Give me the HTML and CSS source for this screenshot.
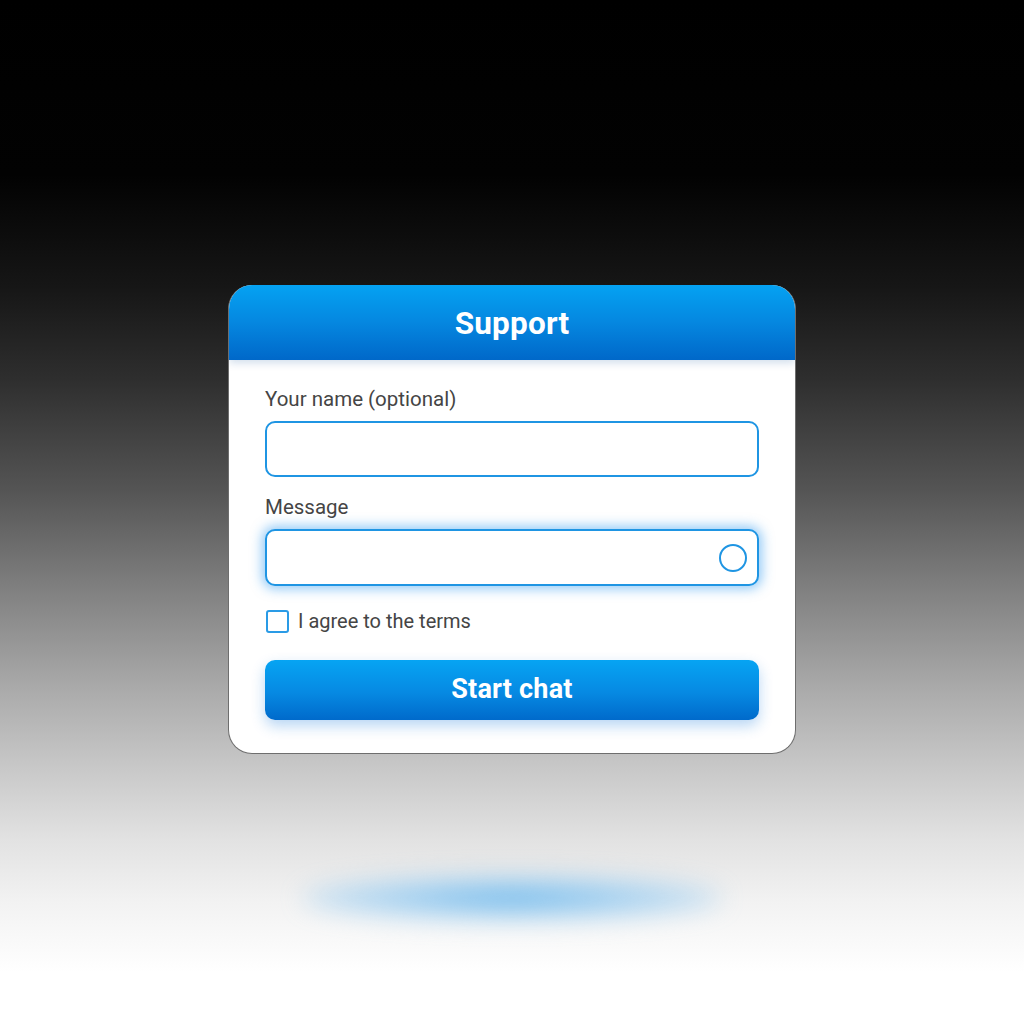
FILE: index.html
```html
<!DOCTYPE html>
<html lang="en">
<head>
<meta charset="utf-8">
<title>Support</title>
<link rel="stylesheet" href="styles.css">
</head>
<body>
<main class="stage">
  <section class="card">
    <header class="card-header">
      <h1 class="title">Support</h1>
    </header>
    <form class="card-body">
      <label class="field-label" for="name">Your name (optional)</label>
      <div class="input-box">
        <input id="name" class="text-input" type="text">
      </div>
      <label class="field-label label-gap" for="msg">Message</label>
      <div class="input-box input-focus">
        <input id="msg" class="text-input" type="text">
        <svg class="input-icon" width="30" height="30" viewBox="0 0 30 30" aria-hidden="true">
          <circle cx="15" cy="15" r="13" fill="none" stroke="#1f95e3" stroke-width="2"/>
        </svg>
      </div>
      <label class="check-row">
        <span class="checkbox"></span>
        <span class="check-text">I agree to the terms</span>
      </label>
      <button class="primary-btn" type="button">Start chat</button>
    </form>
  </section>
  <div class="floor-glow"></div>
</main>
</body>
</html>
```

FILE: styles.css
```css
html, body {
  margin: 0;
  padding: 0;
}
body {
  width: 1024px;
  height: 1024px;
  overflow: hidden;
  background: linear-gradient(to bottom,
    #000000 0%,
    #020202 17%,
    #161616 28%,
    #2e2e2e 37%,
    #555555 48%,
    #828282 58%,
    #a9a9a9 67%,
    #c8c8c8 75%,
    #e2e2e2 82%,
    #f2f2f2 88%,
    #ffffff 95%);
  font-family: Roboto, "Liberation Sans", Arial, sans-serif;
}
.stage {
  display: flex;
  flex-direction: column;
  align-items: center;
  padding-top: 285px;
}
.card {
  width: 566px;
  background: #ffffff;
  border: 1px solid #6e6e6e;
  border-top: none;
  border-radius: 24px;
  overflow: hidden;
  box-sizing: content-box;
}
.card-header {
  height: 75px;
  background: linear-gradient(to bottom, #05a2f2 0%, #0587e0 50%, #0068c9 100%);
  display: flex;
  align-items: center;
  justify-content: center;
  box-shadow: 0 3px 8px rgba(0, 70, 150, 0.18);
  position: relative;
  z-index: 1;
}
.title {
  margin: 0;
  color: #ffffff;
  font-size: 31.5px;
  font-weight: 700;
  letter-spacing: 0.2px;
  line-height: 1;
  padding-top: 2px;
}
.card-body {
  display: flex;
  flex-direction: column;
  padding: 28px 36px 33px 36px;
  margin: 0;
}
.field-label {
  font-size: 20.5px;
  color: #454545;
  line-height: 22px;
  margin-bottom: 11px;
}
.label-gap {
  margin-top: 19px;
}
.input-box {
  height: 56px;
  box-sizing: border-box;
  border: 2px solid #1f95e3;
  border-radius: 10px;
  background: #ffffff;
  display: flex;
  align-items: center;
  padding: 0 9px 0 12px;
}
.input-focus {
  height: 57px;
  box-shadow: 0 0 12px 3px rgba(40, 150, 240, 0.5);
}
.text-input {
  flex: 1;
  border: none;
  outline: none;
  background: transparent;
  font-family: inherit;
  font-size: 18px;
  height: 100%;
  padding: 0;
}
.input-icon {
  display: block;
  flex: none;
}
.check-row {
  display: flex;
  align-items: center;
  gap: 9px;
  margin-top: 23px;
  height: 24px;
  padding-left: 1px;
}
.checkbox {
  width: 23px;
  height: 23px;
  box-sizing: border-box;
  border: 2px solid #2a9be6;
  border-radius: 3px;
  background: #ffffff;
  flex: none;
}
.check-text {
  font-size: 20px;
  color: #454545;
  line-height: 22px;
}
.primary-btn {
  margin-top: 27px;
  height: 60px;
  border: none;
  border-radius: 10px;
  background: linear-gradient(to bottom, #06a4f3 0%, #0689e2 55%, #006acb 100%);
  color: #ffffff;
  font-family: inherit;
  font-size: 27px;
  font-weight: 700;
  letter-spacing: 0.2px;
  box-shadow: 0 6px 14px rgba(20, 120, 220, 0.3);
  padding: 0 0 2px 0;
}
.floor-glow {
  margin-top: 122px;
  width: 420px;
  height: 44px;
  border-radius: 50%;
  background: radial-gradient(ellipse at center, rgba(100, 180, 235, 0.95) 0%, rgba(125, 192, 240, 0.65) 40%, rgba(165, 212, 245, 0) 100%);
  filter: blur(12px);
}
```
